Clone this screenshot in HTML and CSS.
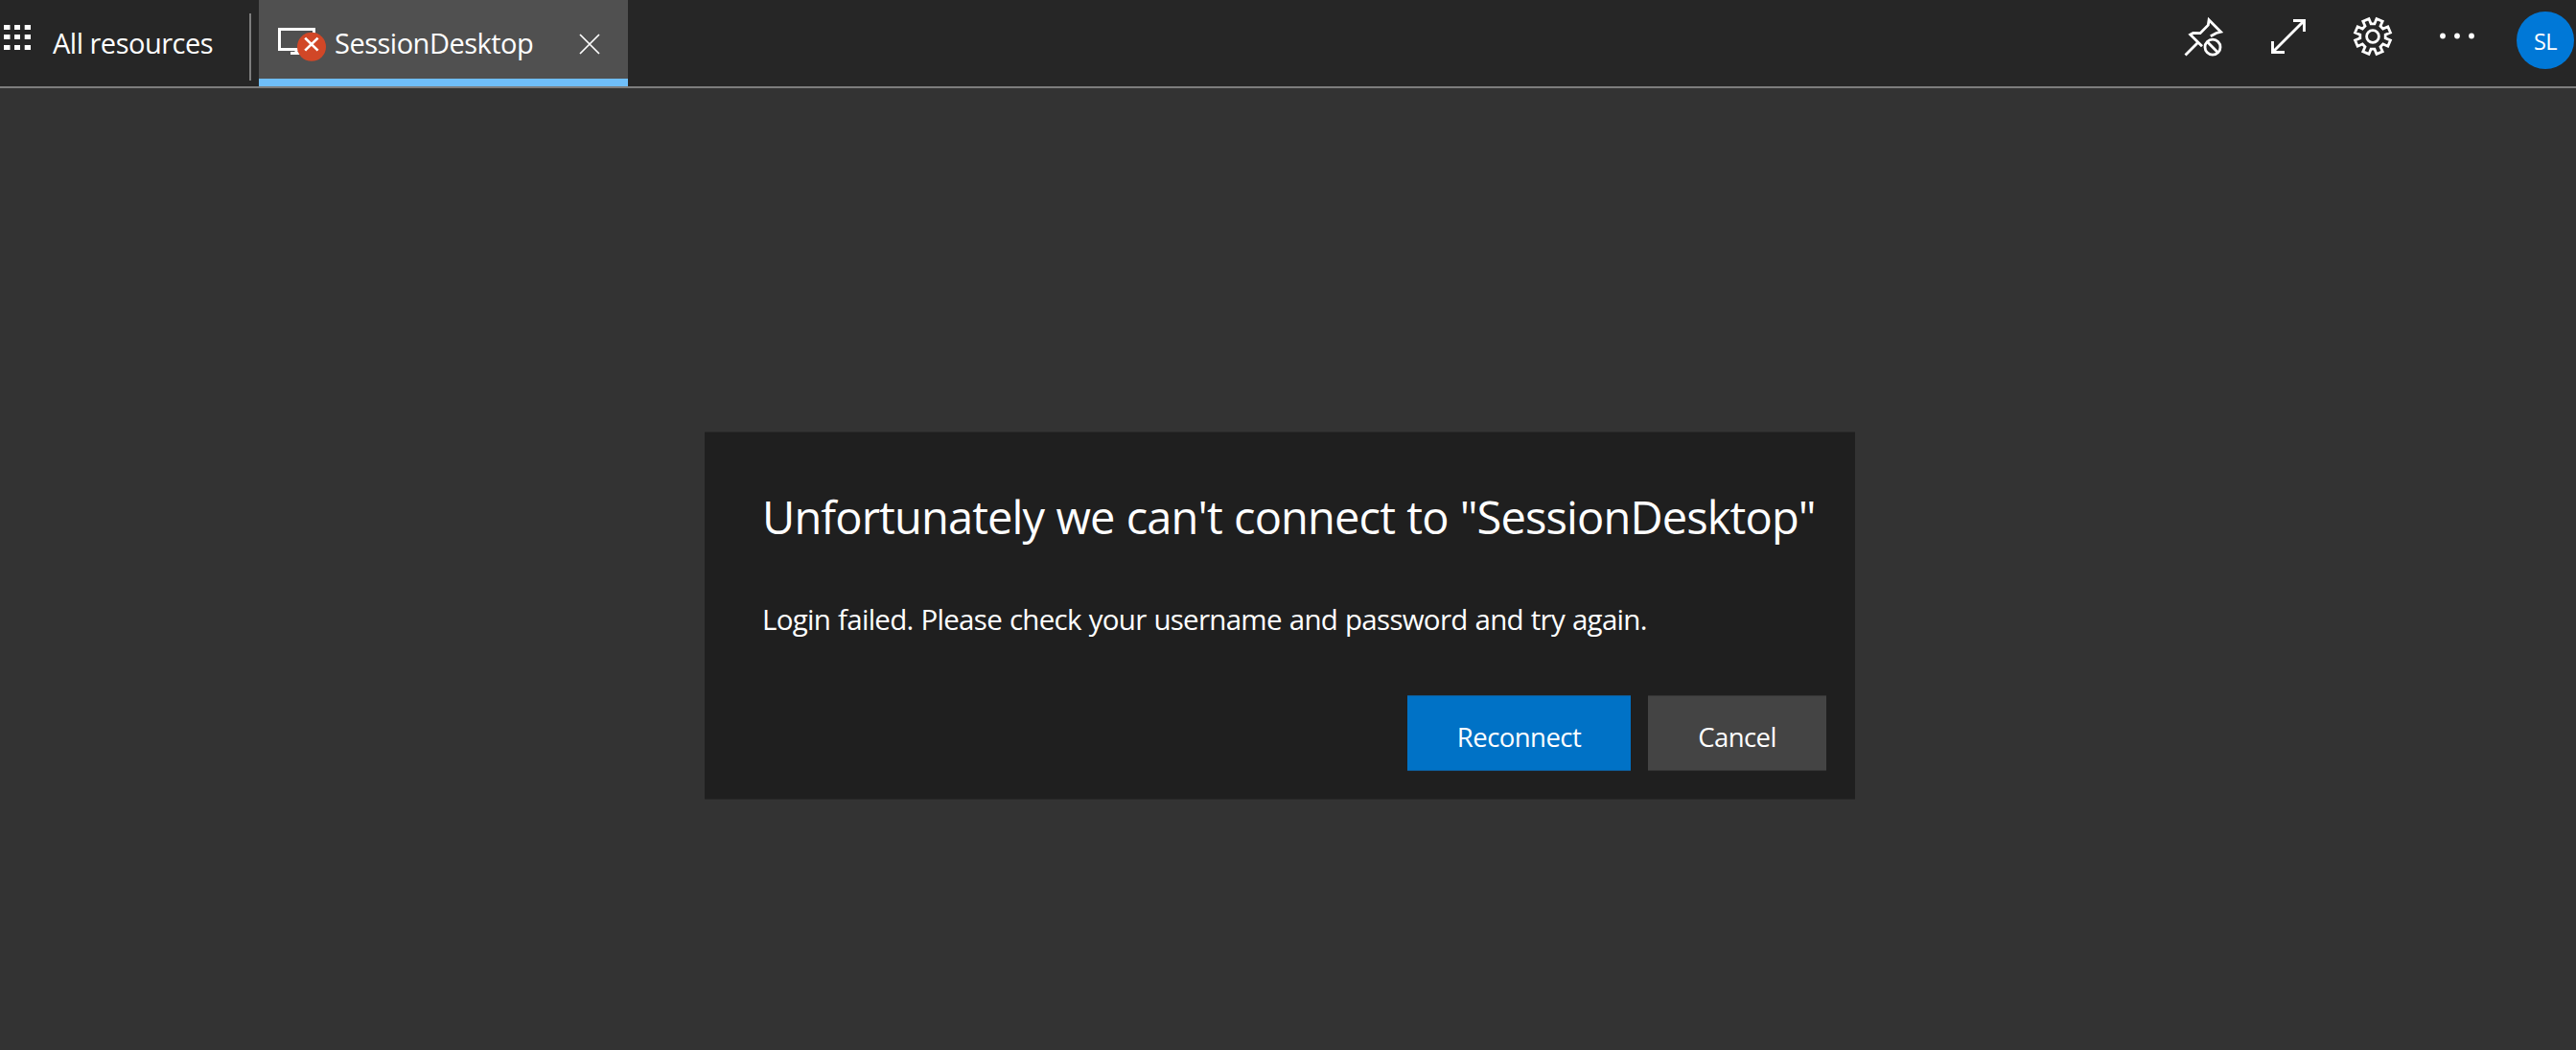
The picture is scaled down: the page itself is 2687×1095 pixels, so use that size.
FILE: index.html
```html
<!DOCTYPE html>
<html lang="en">
<head>
  <meta charset="UTF-8" />
  <meta name="viewport" content="width=device-width, initial-scale=1.0" />
  <title>SessionDesktop</title>
  <link rel="stylesheet" href="styles.css">
</head>
<body>
  <header class="topbar">
    <button class="all-resources">
      <svg class="waffle" width="28" height="26" viewBox="0 0 28 26" fill="#fff">
        <path d="M0 0h6.5v5H0zM11 0h6v5h-6zM21.7 0H28v5h-6.3zM0 10h6.5v5H0zM11 10h6v5h-6zM21.7 10H28v5h-6.3zM0 21h6.5v5H0zM11 21h6v5h-6zM21.7 21H28v5h-6.3z"/>
      </svg>
      <span>All resources</span>
    </button>
    <div class="divider"></div>

    <div class="tab active">
      <svg class="tab-icon" width="52" height="40" viewBox="0 0 52 40" fill="none">
        <path d="M1.5 5.5h36v21h-36z" stroke="#fff" stroke-width="3"/>
        <path d="M19 27v5M13 30.5h14" stroke="#fff" stroke-width="3"/>
        <circle cx="35" cy="23.8" r="15" fill="#d14727"/>
        <path d="M28.2 14.6l13.4 13M41.6 14.6l-13.4 13" stroke="#fff" stroke-width="2.7"/>
      </svg>
      <span class="tab-name">SessionDesktop</span>
      <button class="tab-close" aria-label="Close">
        <svg width="22" height="22" viewBox="0 0 22 22" fill="none" stroke="#fff" stroke-width="1.7">
          <path d="M1 1l20 20M21 1L1 21"/>
        </svg>
      </button>
    </div>

    <div class="actions">
      <button class="action" aria-label="Unpin">
        <svg width="44" height="44" viewBox="0 0 44 44" fill="none" stroke="#fff" stroke-width="2.8">
          <path d="M2.5 41.5L15.5 28.5"/>
          <path d="M20 32.3L7.7 20.1l3-1.6 7.3.2 8.3-8.5.8-5.4 12.4 12.5-4.7 1.2-6 3.2"/>
          <circle cx="31" cy="33.2" r="8"/>
          <path d="M25.3 27.5L36.7 39"/>
        </svg>
      </button>
      <button class="action" aria-label="Full screen">
        <svg width="44" height="44" viewBox="0 0 44 44" fill="none" stroke="#fff" stroke-width="2.9">
          <path d="M5.5 38.5L38 6M27 5.5h11.5V17M5.5 27v11.5H18"/>
        </svg>
      </button>
      <button class="action" aria-label="Settings">
        <svg width="44" height="44" viewBox="-22 -22 44 44" fill="none" stroke="#fff" stroke-width="2.8">
          <path d="M-1.9-13.2H1.9L4-18.4 10.2-15.8 8-10.7 10.7-8 15.8-10.2 18.4-4 13.2-1.9V1.9L18.4 4 15.8 10.2 10.7 8 8 10.7 10.2 15.8 4 18.4 1.9 13.2H-1.9L-4 18.4-10.2 15.8-8 10.7-10.7 8-15.8 10.2-18.4 4-13.2 1.9V-1.9L-18.4-4-15.8-10.2-10.7-8-8-10.7-10.2-15.8-4-18.4Z"/>
          <circle r="6.4"/>
        </svg>
      </button>
      <button class="action" aria-label="More">
        <svg width="44" height="44" viewBox="0 0 44 44" fill="#fff">
          <circle cx="7" cy="21.5" r="2.9"/>
          <circle cx="22" cy="21.5" r="2.9"/>
          <circle cx="37" cy="21.5" r="2.9"/>
        </svg>
      </button>
      <div class="avatar">SL</div>
    </div>
  </header>

  <main class="session">
    <div class="dialog" role="dialog">
      <h1>Unfortunately we can't connect to "SessionDesktop"</h1>
      <p>Login failed. Please check your username and password and try again.</p>
      <div class="dialog-buttons">
        <button class="btn btn-primary">Reconnect</button>
        <button class="btn btn-secondary">Cancel</button>
      </div>
    </div>
  </main>
</body>
</html>
```
FILE: styles.css
```css
* {
  box-sizing: border-box;
}
body {
  margin: 0;
  min-height: 100vh;
  display: flex;
  flex-direction: column;
  background-color: #333;
  color: #fff;
  font-family: 'Segoe UI', 'Open Sans', 'Noto Sans', sans-serif;
}
button {
  padding: 0;
  border: none;
  background: none;
  color: inherit;
  font-family: inherit;
  cursor: pointer;
}

/* top bar */
.topbar {
  display: flex;
  height: 92px;
  background-color: #262626;
  border-bottom: 2px solid #7d7d7d;
}
.all-resources {
  display: flex;
  align-items: flex-start;
  width: 260px;
  padding-left: 4px;
  font-size: 29px;
  line-height: 89px;
  letter-spacing: -0.5px;
}
.waffle {
  margin: 26px 23px 0 0;
}
.divider {
  width: 2px;
  height: 70px;
  margin: 14px 8px 0 0;
  background-color: #7d7d7d;
}
.tab {
  display: flex;
  width: 385px;
  padding-left: 20px;
  font-size: 29px;
  line-height: 89px;
  letter-spacing: -0.5px;
}
.tab.active {
  background-color: #505050;
  border-bottom: 8px solid #6fbef9;
}
.tab-icon {
  margin: 25px 7px 0 0;
}
.tab-name {
  width: 255px;
}
.tab-close {
  display: flex;
  margin-top: 35px;
  height: 22px;
}
.actions {
  display: flex;
  margin-left: auto;
  padding-right: 2px;
}
.action {
  display: flex;
  justify-content: center;
  width: 88px;
  padding-top: 16px;
}
.avatar {
  width: 60px;
  height: 60px;
  margin: 12px 0 0 18px;
  border-radius: 50%;
  background-color: #0078d7;
  font-size: 23.5px;
  line-height: 62px;
  letter-spacing: -0.5px;
  text-align: center;
}

/* connection error */
.session {
  flex: 1;
  display: flex;
  align-items: center;
  justify-content: center;
  padding: 97px 17px 0 0;
}
.dialog {
  width: 1200px;
  height: 384px;
  padding: 57px 30px 29px 60px;
  background-color: #1f1f1f;
  border: solid #292929;
  border-width: 1px 0;
}
.dialog h1 {
  margin: 0;
  font-size: 47px;
  font-weight: 400;
  line-height: 62px;
  letter-spacing: -0.86px;
  word-spacing: 0.8px;
  white-space: nowrap;
}
.dialog p {
  margin: 56px 0 0;
  font-size: 29.5px;
  line-height: 40px;
  letter-spacing: -0.72px;
  word-spacing: 1px;
  white-space: nowrap;
}
.dialog-buttons {
  display: flex;
  justify-content: flex-end;
  gap: 18px;
  margin-top: 59px;
}
.btn {
  height: 79px;
  padding-top: 7px;
  font-size: 27.5px;
  letter-spacing: -0.55px;
}
.btn-primary {
  width: 233px;
  background-color: #0072c6;
  border: solid #105a93;
  border-width: 1px 0;
}
.btn-secondary {
  width: 186px;
  background-color: #444;
  border: solid #343434;
  border-width: 1px 0;
}
```
